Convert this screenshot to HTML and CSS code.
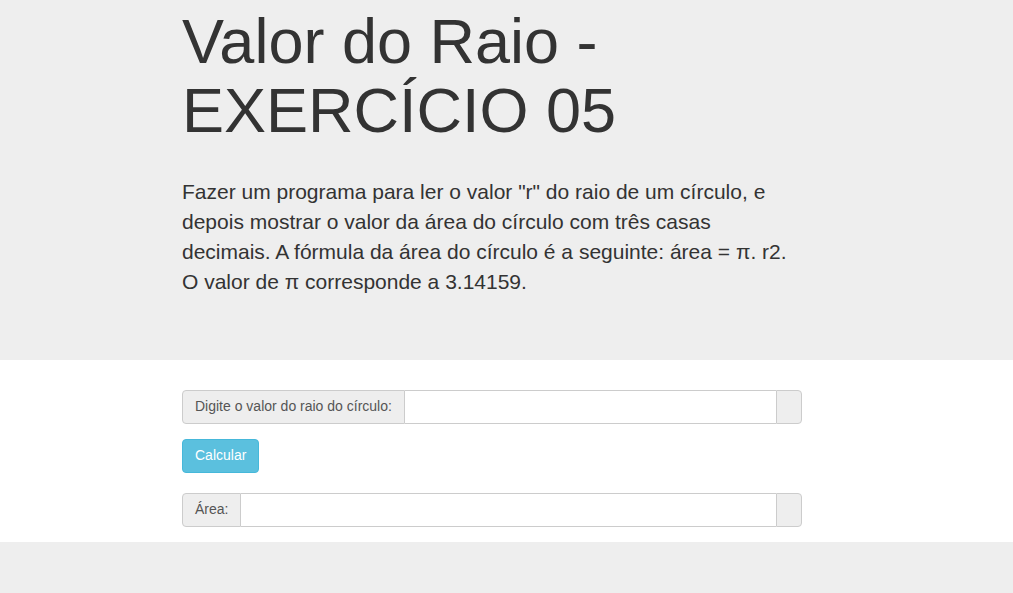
FILE: index.html
```html
<!DOCTYPE html>
<html lang="pt">
<head>
<meta charset="utf-8">
<title>Valor do Raio</title>
<link rel="stylesheet" href="styles.css">
</head>
<body>
<header class="jumbotron">
  <div class="wrap">
    <h1 class="title">Valor do Raio - EXERCÍCIO 05</h1>
    <p class="lead">Fazer um programa para ler o valor "r" do raio de um círculo, e depois mostrar o valor da área do círculo com três casas decimais. A fórmula da área do círculo é a seguinte: área = π. r2. O valor de π corresponde a 3.14159.</p>
  </div>
</header>
<main class="main">
  <form class="wrap form">
    <div class="input-group">
      <span class="addon">Digite o valor do raio do círculo:</span>
      <input class="field" type="text">
      <span class="addon addon-end"></span>
    </div>
    <div class="actions">
      <button type="button" class="btn">Calcular</button>
    </div>
    <div class="input-group">
      <span class="addon">Área:</span>
      <input class="field" type="text">
      <span class="addon addon-end"></span>
    </div>
  </form>
</main>
</body>
</html>
```
FILE: styles.css
```css
* { box-sizing: border-box; }
html, body { margin: 0; padding: 0; }
body {
  background: #eeeeee;
  font-family: "Liberation Sans", Arial, sans-serif;
  font-size: 14px;
  line-height: 1.42857;
  color: #333333;
}
.wrap {
  width: 620px;
  margin-left: 182px;
}
.jumbotron {
  background: #eeeeee;
  padding: 7px 0 48px;
}
.title {
  margin: 0 0 31px;
  font-size: 63px;
  line-height: 1.1;
  font-weight: 400;
  color: #333333;
}
.lead {
  margin: 0 0 15px;
  font-size: 21px;
  line-height: 30px;
  font-weight: 400;
}
.main {
  background: #ffffff;
  padding: 30px 0 15px;
}
.form {
  display: flex;
  flex-direction: column;
}
.input-group {
  display: flex;
  height: 34px;
}
.addon {
  display: flex;
  align-items: center;
  padding: 6px 12px;
  font-size: 14px;
  color: #555555;
  background: #eeeeee;
  border: 1px solid #cccccc;
  border-radius: 4px 0 0 4px;
  white-space: nowrap;
}
.addon-end {
  width: 26px;
  padding: 0;
  border-radius: 0 4px 4px 0;
}
.field {
  flex: 1;
  min-width: 0;
  height: 34px;
  border: 1px solid #cccccc;
  border-left: 0;
  border-right: 0;
  padding: 6px 12px;
  font: inherit;
  color: #555555;
  background: #ffffff;
  outline: none;
}
.actions {
  margin: 15px 0 20px;
}
.btn {
  height: 34px;
  padding: 6px 12px;
  font-family: inherit;
  font-size: 14px;
  line-height: 1.42857;
  color: #ffffff;
  background: #5bc0de;
  border: 1px solid #46b8da;
  border-radius: 4px;
}
```
